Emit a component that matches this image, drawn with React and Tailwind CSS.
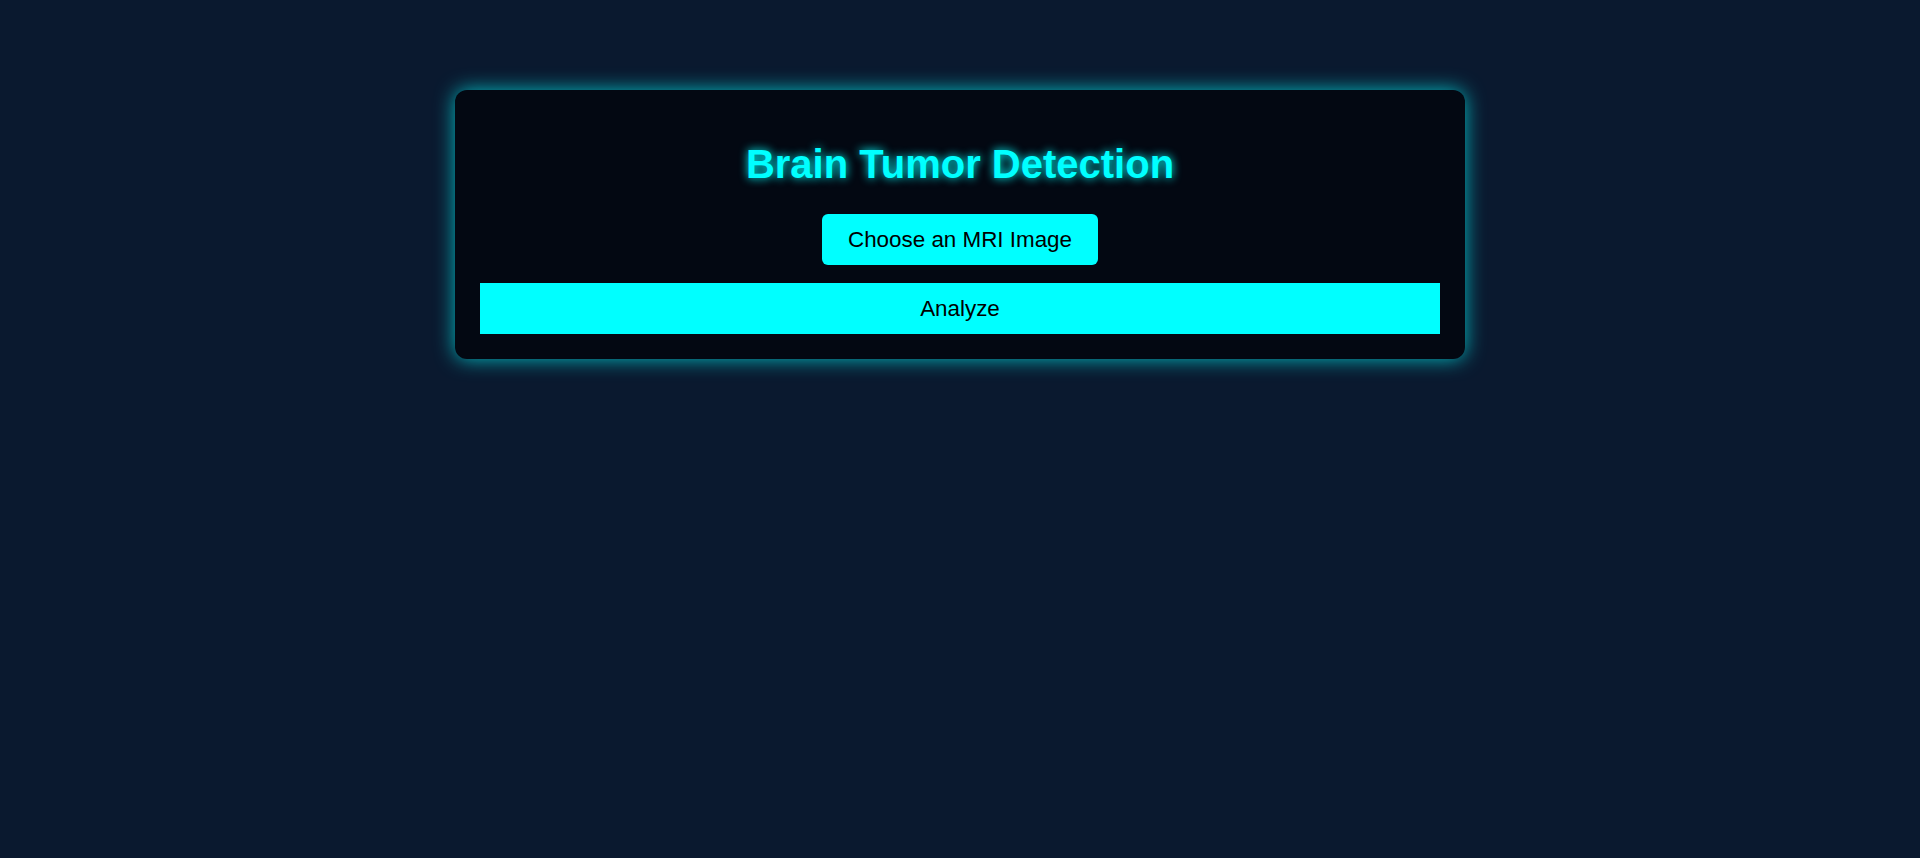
import React, { useState } from 'react';

const App = () => {
    const [file, setFile] = useState(null);

    return (
        <div className="min-h-screen bg-[#0a192f] font-['Liberation_Sans',Arial,sans-serif] pt-[90px]">
            <div className="mx-auto w-[1010px] bg-[#030812] rounded-xl p-[25px] shadow-[0_0_20px_rgba(0,255,255,0.7)] text-center">
                <h1 className="mt-[26px] mb-[27px] text-[40px] leading-[46px] font-bold text-[#00ffff] [text-shadow:0_0_10px_#00ffff]">
                    Brain Tumor Detection
                </h1>
                <label className="inline-flex items-center justify-center h-[51px] px-[26px] bg-[#00ffff] text-black text-[22.4px] rounded-md cursor-pointer">
                    Choose an MRI Image
                    <input
                        type="file"
                        accept="image/*"
                        className="hidden"
                        onChange={(e) => setFile(e.target.files[0])}
                    />
                </label>
                <button className="flex items-center justify-center w-full h-[51px] mt-[18px] bg-[#00ffff] text-black text-[22.4px]">
                    Analyze
                </button>
            </div>
        </div>
    );
};

export default App;
